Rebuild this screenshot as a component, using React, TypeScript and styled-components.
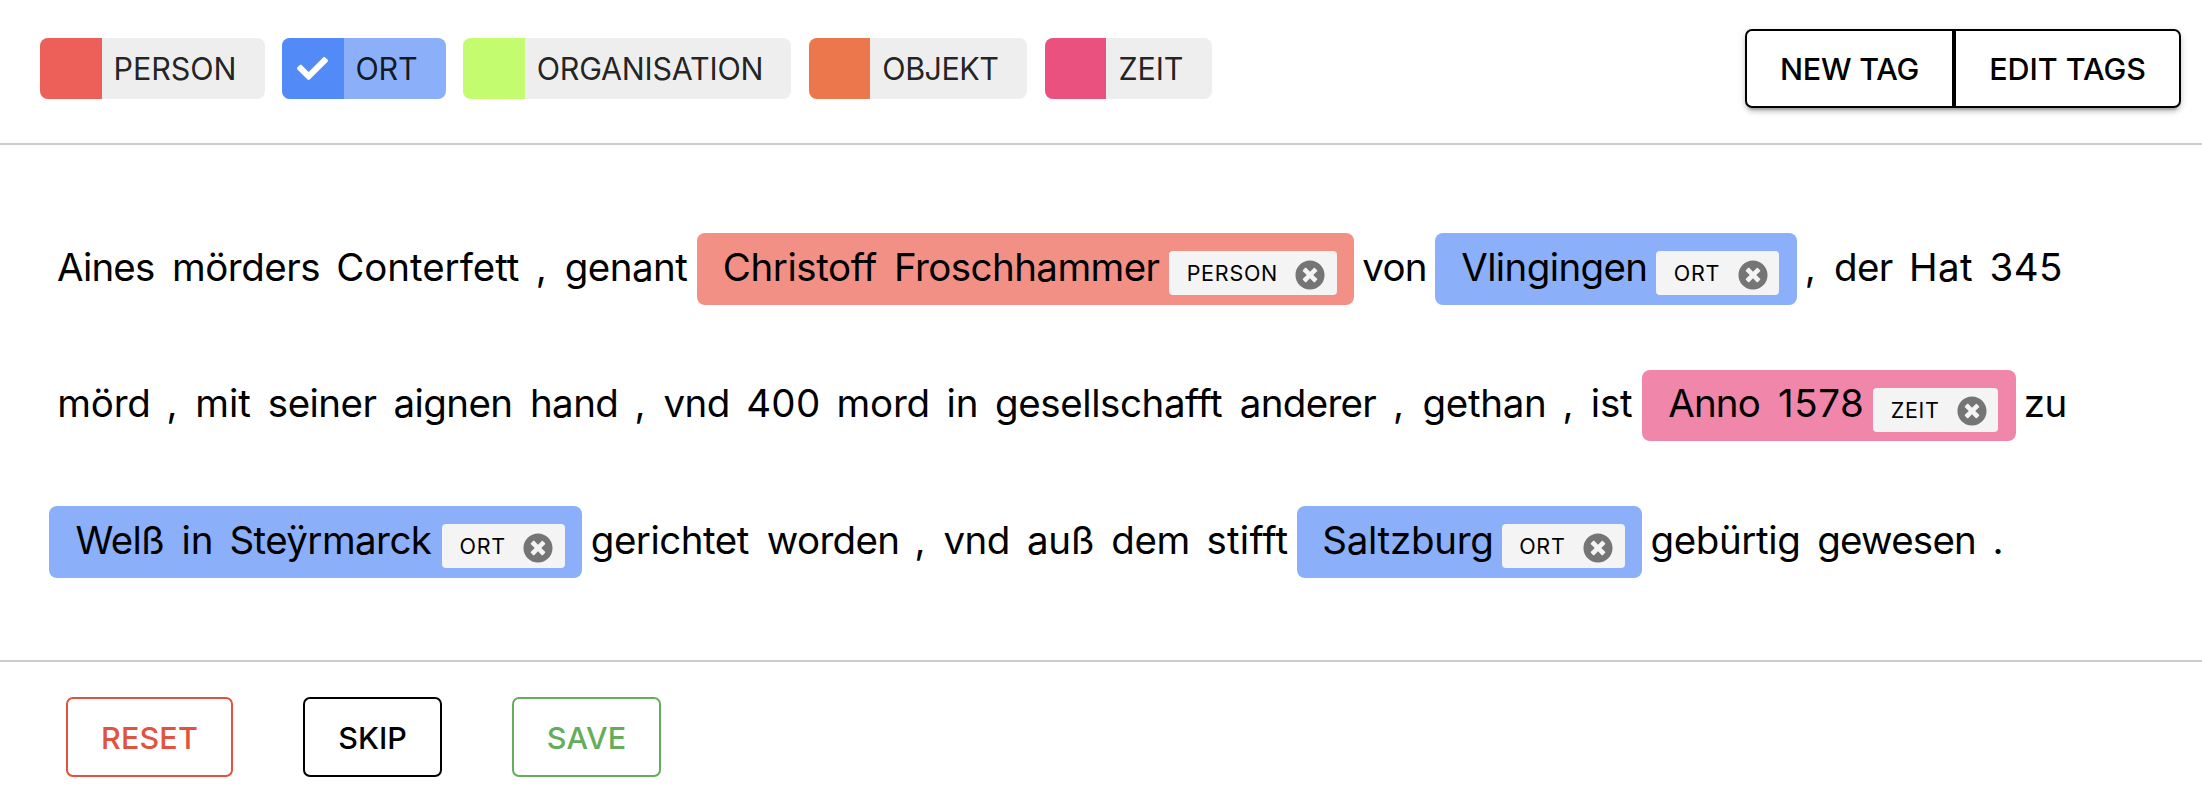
import React from 'react';
import styled, { createGlobalStyle } from 'styled-components';
import { FaCheck, FaTimesCircle } from 'react-icons/fa';

const GlobalStyle = createGlobalStyle`
  * { box-sizing: border-box; }
  body {
    margin: 0;
    background: #fff;
    color: #000;
    font-family: Inter, 'Liberation Sans', sans-serif;
  }
`;

const Page = styled.div`
  display: flex;
  flex-direction: column;
  height: 802px;
  overflow: hidden;
`;

const Toolbar = styled.header`
  display: flex;
  justify-content: space-between;
  align-items: center;
  height: 145px;
  padding: 0 21px 6px 40px;
  border-bottom: 2px solid #ccc;
`;

const TagList = styled.div`
  display: flex;
  gap: 17.4px;
`;

const TagChip = styled.button<{ $width: number; $fill: string }>`
  display: flex;
  width: ${(p) => p.$width}px;
  height: 61px;
  padding: 0;
  border: 0;
  border-radius: 8px;
  overflow: hidden;
  background: ${(p) => p.$fill};
`;

const Swatch = styled.span<{ $color: string }>`
  display: flex;
  align-items: center;
  justify-content: center;
  width: 61.6px;
  height: 100%;
  background: ${(p) => p.$color};
  color: #fff;
  font-size: 31px;
`;

const TagName = styled.span<{ $tracking: number }>`
  padding: 0 0 0 12px;
  color: rgba(0, 0, 0, 0.87);
  font: 400 30.5px/61px Inter, sans-serif;
  letter-spacing: ${(p) => p.$tracking}px;
  white-space: nowrap;
`;

const ButtonGroup = styled.div`
  display: flex;
  border-radius: 8px;
  box-shadow: 0 6px 2px -4px rgba(0, 0, 0, 0.2), 0 4px 4px 0 rgba(0, 0, 0, 0.14),
    0 2px 10px 0 rgba(0, 0, 0, 0.12);
`;

const OutlineButton = styled.button<{ $width: number; $color?: string; $tracking: number }>`
  width: ${(p) => p.$width}px;
  height: 79px;
  padding: 0;
  border: 2px solid ${(p) => p.$color ?? '#000'};
  border-radius: 7px;
  background: #fff;
  color: ${(p) => p.$color ?? '#000'};
  font: 460 30.5px/75px Inter, sans-serif;
  letter-spacing: ${(p) => p.$tracking}px;
  white-space: nowrap;

  ${ButtonGroup} &:first-child {
    border-top-right-radius: 0;
    border-bottom-right-radius: 0;
  }
  ${ButtonGroup} &:last-child {
    border-top-left-radius: 0;
    border-bottom-left-radius: 0;
  }
`;

const Document = styled.main`
  height: 515px;
  padding: 88px 0 0 49px;
`;

const Line = styled.div<{ $indent?: number }>`
  display: flex;
  align-items: flex-start;
  height: 136.5px;
  padding-left: ${(p) => p.$indent ?? 0}px;
`;

const Token = styled.span<{ $width: number; $tracking: number }>`
  flex: none;
  width: ${(p) => p.$width}px;
  margin-top: -0.4px;
  font-size: 38.5px;
  line-height: 68px;
  letter-spacing: ${(p) => p.$tracking}px;
  white-space: nowrap;
`;

const Entity = styled.span<{ $fill: string; $lead: number; $gap: number }>`
  display: flex;
  flex: none;
  align-items: flex-start;
  height: 71.5px;
  margin-right: ${(p) => p.$gap}px;
  padding: 0 17.5px 0 ${(p) => p.$lead}px;
  border-radius: 8px;
  background: ${(p) => p.$fill};
`;

const Label = styled.span`
  display: flex;
  align-items: center;
  height: 44px;
  margin-top: 18px;
  padding: 0 11.5px 0 17.5px;
  border-radius: 4px;
  background: #f4f4f4;
`;

const LabelText = styled.span<{ $width: number }>`
  width: ${(p) => p.$width}px;
  font-size: 21.5px;
  line-height: 44px;
  letter-spacing: 0.75px;
`;

const RemoveIcon = styled(FaTimesCircle)`
  width: 30px;
  height: 30px;
  margin-top: 3px;
  color: #757575;
`;

const Footer = styled.footer`
  display: flex;
  gap: 70px;
  height: 142px;
  padding: 35px 0 0 66px;
  border-top: 2px solid #ccc;

  ${OutlineButton} {
    height: 80px;
  }
`;

type Word = [text: string, width: number, tracking?: number];
type Mark = { kind: Kind; lead: number; gap: number; words: Word[] };
type Kind = 'PERSON' | 'ORT' | 'ZEIT';

const kinds: Record<Kind, { fill: string; labelWidth: number }> = {
  PERSON: { fill: '#f29085', labelWidth: 108.5 },
  ORT: { fill: '#8bb0f9', labelWidth: 64 },
  ZEIT: { fill: '#f086a9', labelWidth: 66 },
};

const tags = [
  { name: 'PERSON', color: '#ed6059', width: 224.6, tracking: -0.1 },
  { name: 'ORT', color: '#528af7', width: 163.8, tracking: -0.3, selected: true },
  { name: 'ORGANISATION', color: '#c4fc70', width: 328.2, tracking: -0.25 },
  { name: 'OBJEKT', color: '#ed774d', width: 218.7, tracking: -0.5 },
  { name: 'ZEIT', color: '#eb517f', width: 167, tracking: -0.15 },
];

const lines: { indent?: number; items: (Word | Mark)[] }[] = [
  {
    indent: 8,
    items: [
      ['Aines', 115, -0.85],
      ['mörders', 164.2, -0.5],
      ['Conterfett', 199.5, -0.04],
      [',', 29.1],
      ['genant', 132.2, -0.55],
      {
        kind: 'PERSON',
        lead: 25.9,
        gap: 8.2,
        words: [
          ['Christoff', 171.1, -0.45],
          ['Froschhammer', 275.2, -0.57],
        ],
      },
      ['von', 72.8, -0.8],
      { kind: 'ORT', lead: 26.1, gap: 7.9, words: [['Vlingingen', 195.1, -0.62]] },
      [',', 29.3],
      ['der', 75, -0.6],
      ['Hat', 80.5, 0.4],
      ['345', 80, 0.4],
    ],
  },
  {
    indent: 8.3,
    items: [
      ['mörd', 109.2, -0.2],
      [',', 28.7],
      ['mit', 72.7],
      ['seiner', 125.6, -0.55],
      ['aignen', 136.5, -0.58],
      ['hand', 104.5, -0.6],
      [',', 29.1],
      ['vnd', 82.6, -0.6],
      ['400', 90.4, 0.3],
      ['mord', 109.9, -0.2],
      ['in', 48.7, 0.1],
      ['gesellschafft', 244.7, -0.42],
      ['anderer', 153.3, -0.7],
      [',', 29.4],
      ['gethan', 139.9, -0.3],
      [',', 28.4],
      ['ist', 51.1, -0.2],
      {
        kind: 'ZEIT',
        lead: 26.4,
        gap: 8,
        words: [
          ['Anno', 109.8, -0.85],
          ['1578', 95.1, 0.55],
        ],
      },
      ['zu', 60, -0.3],
    ],
  },
  {
    items: [
      {
        kind: 'ORT',
        lead: 26.5,
        gap: 8.3,
        words: [
          ['Welß', 106.1, -0.75],
          ['in', 47.8, -0.2],
          ['Steÿrmarck', 212.6, -0.57],
        ],
      },
      ['gerichtet', 176, -0.5],
      ['worden', 147.7, -0.65],
      [',', 29],
      ['vnd', 83.5, -0.5],
      ['auß', 84.2, -0.3],
      ['dem', 95.3, -0.3],
      ['stifft', 90.2, 0.25],
      { kind: 'ORT', lead: 25.6, gap: 8.4, words: [['Saltzburg', 179.4, -0.28]] },
      ['gebürtig', 166.7, -0.4],
      ['gewesen', 175.4, -0.75],
      ['.', 12],
    ],
  },
];

const renderWord = ([text, width, tracking = 0]: Word, key: number) => (
  <Token key={key} $width={width} $tracking={tracking}>
    {text}
  </Token>
);

function MarkedEntity({ mark }: { mark: Mark }) {
  const { fill, labelWidth } = kinds[mark.kind];
  return (
    <Entity $fill={fill} $lead={mark.lead} $gap={mark.gap}>
      {mark.words.map(renderWord)}
      <Label>
        <LabelText $width={labelWidth}>{mark.kind}</LabelText>
        <RemoveIcon />
      </Label>
    </Entity>
  );
}

export default function App() {
  return (
    <Page>
      <GlobalStyle />
      <Toolbar>
        <TagList>
          {tags.map((tag) => (
            <TagChip key={tag.name} $width={tag.width} $fill={tag.selected ? '#8bb0f9' : '#eee'}>
              <Swatch $color={tag.color}>{tag.selected && <FaCheck />}</Swatch>
              <TagName $tracking={tag.tracking}>{tag.name}</TagName>
            </TagChip>
          ))}
        </TagList>
        <ButtonGroup>
          <OutlineButton $width={209} $tracking={-0.25}>NEW TAG</OutlineButton>
          <OutlineButton $width={227} $tracking={-0.05}>EDIT TAGS</OutlineButton>
        </ButtonGroup>
      </Toolbar>
      <Document>
        {lines.map((line, i) => (
          <Line key={i} $indent={line.indent}>
            {line.items.map((item, j) =>
              Array.isArray(item) ? renderWord(item, j) : <MarkedEntity key={j} mark={item} />
            )}
          </Line>
        ))}
      </Document>
      <Footer>
        <OutlineButton $width={167} $color="#e2533f" $tracking={0.15}>RESET</OutlineButton>
        <OutlineButton $width={139} $tracking={0}>SKIP</OutlineButton>
        <OutlineButton $width={149} $color="#65ad5b" $tracking={0.1}>SAVE</OutlineButton>
      </Footer>
    </Page>
  );
}
